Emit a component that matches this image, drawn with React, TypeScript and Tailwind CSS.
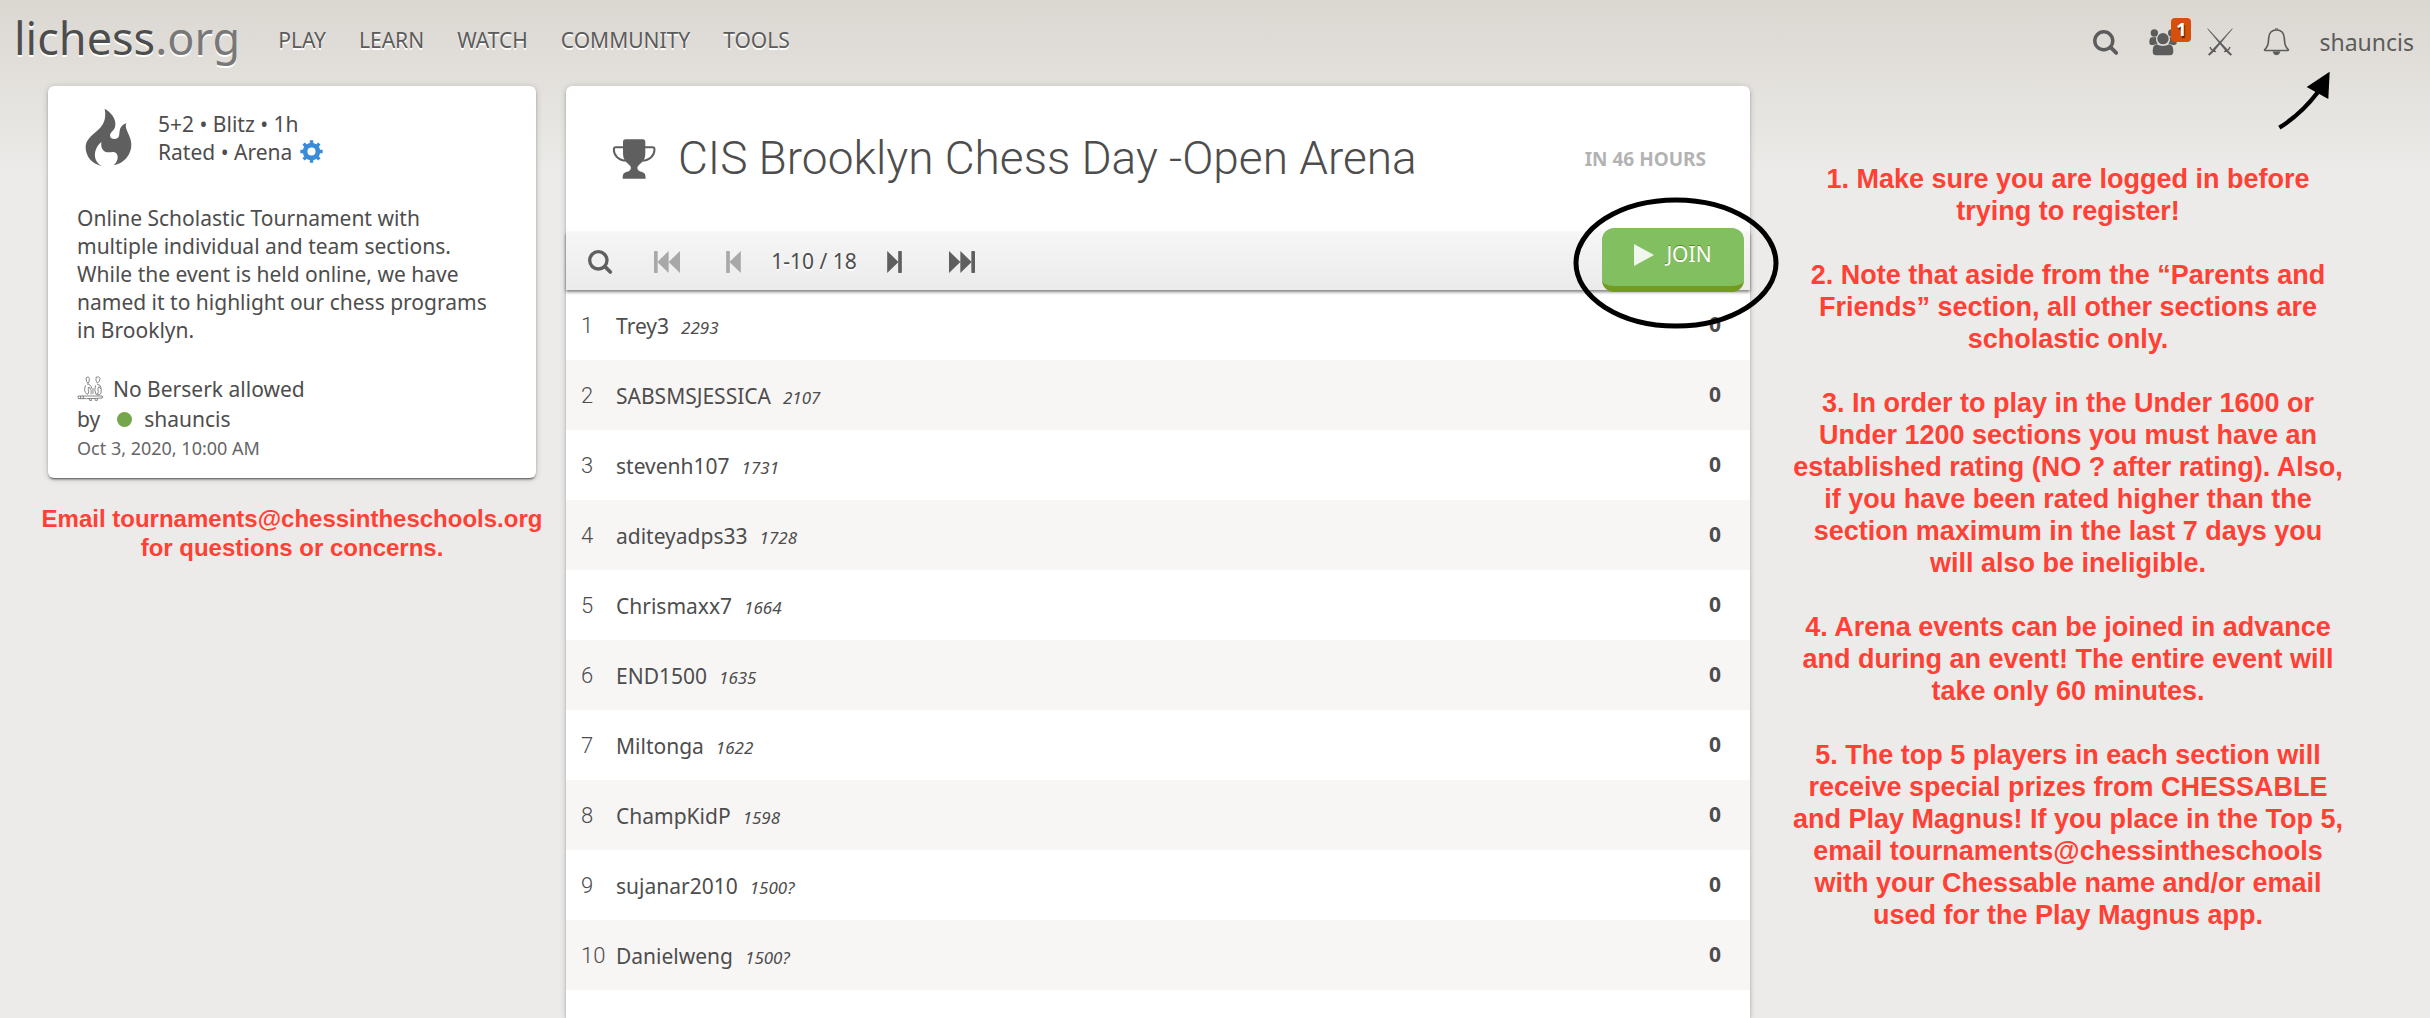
import React from 'react';

interface Player {
  name: string;
  rating: string;
}

const NAV_LINKS = ['Play', 'Learn', 'Watch', 'Community', 'Tools'];

const PLAYERS: Player[] = [
  { name: 'Trey3', rating: '2293' },
  { name: 'SABSMSJESSICA', rating: '2107' },
  { name: 'stevenh107', rating: '1731' },
  { name: 'aditeyadps33', rating: '1728' },
  { name: 'Chrismaxx7', rating: '1664' },
  { name: 'END1500', rating: '1635' },
  { name: 'Miltonga', rating: '1622' },
  { name: 'ChampKidP', rating: '1598' },
  { name: 'sujanar2010', rating: '1500?' },
  { name: 'Danielweng', rating: '1500?' },
];

const INSTRUCTIONS = [
  '1. Make sure you are logged in before trying to register!',
  '2. Note that aside from the “Parents and Friends” section, all other sections are scholastic only.',
  '3. In order to play in the Under 1600 or Under 1200 sections you must have an established rating (NO ? after rating). Also, if you have been rated higher than the section maximum in the last 7 days you will also be ineligible.',
  '4. Arena events can be joined in advance and during an event! The entire event will take only 60 minutes.',
  '5. The top 5 players in each section will receive special prizes from CHESSABLE and Play Magnus! If you place in the Top 5, email tournaments@chessintheschools with your Chessable name and/or email used for the Play Magnus app.',
];

const CARD =
  'bg-white shadow-[0_2px_2px_0_rgba(0,0,0,0.24),0_3px_1px_-2px_rgba(0,0,0,0.3),0_1px_6px_0_rgba(0,0,0,0.2)]';

function SearchIcon({ className }: { className: string }) {
  return (
    <svg viewBox="0 0 78 78" className={className} fill="none" stroke="currentColor">
      <circle cx="34" cy="34" r="26" strokeWidth="10" />
      <path d="M54 53 70 69" strokeWidth="11" strokeLinecap="round" />
    </svg>
  );
}

function TeamIcon() {
  return (
    <svg viewBox="326 96 84 82" className="w-7 h-7" fill="currentColor">
      <circle cx="342" cy="110" r="11" />
      <circle cx="394" cy="110" r="11" />
      <circle cx="368" cy="127" r="17" />
      <path d="M334 123h14q-3 12 4 19-8 1-12 4h-8q-6-1-5-8 0-13 7-15z" />
      <path d="M402 123h-14q3 12-4 19 8 1 12 4h8q6-1 5-8 0-13-7-15z" />
      <path d="M349 144q19 10 38 0 12 2 12 20 0 13-10 13h-42q-10 0-10-13 0-18 12-20z" />
    </svg>
  );
}

function SwordsIcon() {
  return (
    <svg viewBox="500 85 78 84" className="w-[26px] h-7" fill="currentColor" stroke="currentColor">
      <path d="M502 87 556 153 560 149z" strokeWidth="2" />
      <path d="M576 87 522 153 518 149z" strokeWidth="2" />
      <path d="M556 150 573 166M522 150 505 166" strokeWidth="6" />
      <path d="M509 142q4 12 18 14M569 142q-4 12-18 14" fill="none" strokeWidth="4" />
    </svg>
  );
}

function BellIcon() {
  return (
    <svg viewBox="670 84 82 86" className="w-[27px] h-7" fill="none" stroke="currentColor">
      <path
        d="M711 90c-15 0-23 10-24 25-1 18-2 25-12 35q-2 2 1 3h70q3-1 1-3c-10-10-11-17-12-35-1-15-9-25-24-25z"
        strokeWidth="5"
      />
      <path d="M707 89q0-4 4-4t4 4" strokeWidth="3" />
      <path d="M700 156h22q-2 11-11 11t-11-11z" fill="currentColor" strokeWidth="1" />
    </svg>
  );
}

function FlameIcon() {
  return (
    <svg viewBox="133 88 141 177" className="w-[47px] h-[59px]" fill="currentColor">
      <path d="M192 90C212 102 226 120 224 140C222 158 207 160 208 172C209 183 232 184 235 172C238 158 234 142 257 134C249 150 271 170 272 196C273 228 250 254 219 260C234 248 235 226 222 221C212 218 206 224 193 219C184 214 180 204 182 190C160 208 152 246 185 263C152 256 135 232 135 206C135 160 206 160 192 90Z" />
    </svg>
  );
}

function GearIcon() {
  return (
    <svg viewBox="-34 -34 68 68" className="w-[23px] h-[23px]" fill="none" stroke="currentColor">
      <circle r="19" strokeWidth="14" />
      {[0, 45, 90, 135].map((angle) => (
        <g key={angle} transform={`rotate(${angle})`} strokeWidth="10">
          <path d="M0-33V-20M0 20V33" />
        </g>
      ))}
    </svg>
  );
}

function BerserkIcon() {
  return (
    <svg viewBox="110 80 78 78" className="w-[26px] h-[26px]" fill="none" stroke="currentColor" strokeWidth="2">
      <path d="M137 86q8-7 10 2 1 8-4 14-6-4-6-16zM167 84q9-5 12 3 1 10-8 14-6-7-4-17z" />
      <path d="M136 108q-8 16 4 27 5 0 5-8-4-9 1-14 10 8 6 22M166 108q-6 14 1 27 8 1 7-8-4-10 2-15 11 8 6 20-3 5-12 5" />
      <path d="M140 104q12 0 14 14M170 104q12 2 13 14M158 116v18" />
      <path d="M113 140h73v6q-20 2-72 2zM121 140v8M129 140v8M146 148q1 8 7 6v-6M163 148q1 8 8 5v-5" />
    </svg>
  );
}

function TrophyIcon() {
  return (
    <svg viewBox="155 56 133 122" className="w-11 h-10" fill="currentColor">
      <path d="M196 57h52q8 0 8 8v35c0 22-12 28-20 36-6 6-6 14 4 19 12 3 17 4 17 22h-70c0-18 5-19 17-22 10-5 10-13 4-19-8-8-20-14-20-36v-35q0-8 8-8z" />
      <path
        d="M190 81h-24q-6 0-6 7c0 18 14 34 38 34M254 81h24q6 0 6 7c0 18-14 34-38 34"
        fill="none"
        stroke="currentColor"
        strokeWidth="6"
      />
    </svg>
  );
}

function StepIcon({ double, flip }: { double?: boolean; flip?: boolean }) {
  return (
    <svg
      viewBox={double ? '0 0 78 66' : '0 0 44 66'}
      className={`h-[22px] ${double ? 'w-[26px]' : 'w-[15px]'} ${flip ? 'rotate-180' : ''}`}
      fill="currentColor"
    >
      {double ? <path d="M0 0 34 33 0 66zM34 0 68 33 34 66z" /> : <path d="M0 0 34 33 0 66z" />}
      <rect x={double ? 67 : 33} width="11" height="66" rx="2" />
    </svg>
  );
}

function Header() {
  return (
    <header className="relative flex items-center h-[86px] pl-3.5 pr-4 text-[21px] [text-shadow:0_2px_0_#fff]">
      <a href="#" className="pb-3 text-[45px] leading-none">
        lichess<span className="text-[#787878]">.org</span>
      </a>
      <nav className="flex gap-[33px] ml-[38px] pb-1 text-[#5c5c5c]">
        {NAV_LINKS.map((link) => (
          <a key={link} href="#" className="uppercase">
            {link}
          </a>
        ))}
      </nav>
      <div className="flex items-center ml-auto pb-0.5 text-[#5c5c5c]">
        <button aria-label="Search" className="flex justify-center w-[57px]">
          <SearchIcon className="w-[27px] h-[27px]" />
        </button>
        <button aria-label="Teams" className="relative flex justify-center w-[57px]">
          <TeamIcon />
          <span className="absolute -top-2.5 right-0 w-5 h-6 rounded bg-[#d64f0b] text-center text-lg leading-[22px] font-bold text-white [text-shadow:1px_2px_1px_rgba(0,0,0,0.6)]">
            1
          </span>
        </button>
        <button aria-label="Challenges" className="flex justify-center w-[57px]">
          <SwordsIcon />
        </button>
        <button aria-label="Notifications" className="flex justify-center w-[57px]">
          <BellIcon />
        </button>
        <a href="#" className="pl-3.5 text-[23px] [text-shadow:none]">
          shauncis
        </a>
      </div>
      {/* Arrow pointing at the username */}
      <svg viewBox="708 210 168 180" className="absolute right-[98px] top-[70px] w-14 h-15 text-black">
        <path d="M718 383C762 356 802 318 834 276" fill="none" stroke="currentColor" strokeWidth="13" />
        <path d="M869 215 800 261 865 297z" fill="currentColor" />
      </svg>
    </header>
  );
}

function Sidebar() {
  return (
    <aside className="flex flex-col items-center">
      <div className={`w-full rounded-md pl-[29px] pr-10 pt-[22px] pb-4 ${CARD}`}>
        <div className="flex items-center pl-2 text-[#5f5f5f]">
          <FlameIcon />
          <div className="ml-[26px] leading-7 text-[#4d4d4d]">
            <p>5+2 • Blitz • 1h</p>
            <p className="flex items-center gap-2">
              Rated • Arena
              <a href="#" aria-label="Edit tournament" className="text-[#3a8bd8]">
                <GearIcon />
              </a>
            </p>
          </div>
        </div>
        <p className="mt-[37px] leading-7">
          Online Scholastic Tournament with multiple individual and team sections. While the event is held online, we
          have named it to highlight our chess programs in Brooklyn.
        </p>
        <p className="flex items-center gap-2.5 mt-[30px] leading-[30px]">
          <BerserkIcon />
          No Berserk allowed
        </p>
        <p className="flex items-center leading-[30px]">
          by
          <span className="w-[15px] h-[15px] ml-[17px] mr-3 rounded-full bg-[#74a64b]" />
          <a href="#">shauncis</a>
        </p>
        <time className="block text-lg leading-7 text-[#666]">Oct 3, 2020, 10:00 AM</time>
      </div>
      <p className="mt-[26px] text-center font-['Liberation_Sans',sans-serif] font-bold text-2xl leading-[29px] text-[#ff4035] whitespace-nowrap">
        Email tournaments@chessintheschools.org
        <br />
        for questions or concerns.
      </p>
    </aside>
  );
}

function Pager() {
  const button = 'flex justify-center w-[67px]';

  return (
    <div className="relative flex items-center h-[58px] pt-0.5 pr-1.5 bg-linear-to-b from-[#f6f6f6] to-[#ebebeb] text-[#5f5f5f] shadow-[0_2px_3px_rgba(0,0,0,0.5)]">
      <button aria-label="Search player" className={button}>
        <SearchIcon className="w-[26px] h-[26px]" />
      </button>
      <button aria-label="First page" disabled className={`${button} text-[#a8a8a8]`}>
        <StepIcon double flip />
      </button>
      <button aria-label="Previous page" disabled className={`${button} text-[#a8a8a8]`}>
        <StepIcon flip />
      </button>
      <span className="min-w-[94px] text-center text-[#4d4d4d] [text-shadow:0_2px_0_#fff]">1-10 / 18</span>
      <button aria-label="Next page" className={button}>
        <StepIcon />
      </button>
      <button aria-label="Last page" className={button}>
        <StepIcon double />
      </button>
      <div className="relative ml-auto mb-1">
        <button className="flex items-center justify-center gap-3 w-[142px] h-16 pb-1 rounded-xl border-b-[6px] border-[#739b20] bg-[#82bf60] text-white uppercase [text-shadow:0_-1px_0_#5a8a20]">
          <svg viewBox="0 0 20 22" className="w-5 h-[22px]" fill="#f0f7ec">
            <path d="M0 0 20 11 0 22z" />
          </svg>
          Join
        </button>
        {/* Hand-drawn ring around the join button */}
        <svg
          viewBox="0 0 206 132"
          className="absolute -left-[29px] -top-[31px] z-10 w-[206px] max-w-none h-[132px] pointer-events-none"
        >
          <ellipse cx="103" cy="66" rx="100" ry="63" fill="none" stroke="#000" strokeWidth="5" />
        </svg>
      </div>
    </div>
  );
}

function Standings() {
  return (
    <table className="w-full">
      <tbody>
        {PLAYERS.map((player, i) => (
          <tr key={player.name} className="h-[70px] even:bg-[#f7f6f5]">
            <td className="w-[50px] pl-[15px] font-['Roboto',sans-serif] font-light text-[22px]">{i + 1}</td>
            <td className="pt-[3px]">
              <a href="#">{player.name}</a>
              <span className="ml-3 text-[17px] italic">{player.rating}</span>
            </td>
            <td className="pr-[29px] text-right font-bold">0</td>
          </tr>
        ))}
      </tbody>
    </table>
  );
}

export default function App() {
  return (
    <div className="min-h-screen bg-[#ecebe9] bg-[linear-gradient(to_bottom,#dbd7d1,#ecebe9_174px)] font-['Noto_Sans',sans-serif] text-[21px] text-[#4d4d4d]">
      <Header />
      <div className="grid grid-cols-[488px_minmax(0,1fr)_680px] pl-12">
        <Sidebar />
        <main className={`ml-[30px] min-h-[932px] rounded-t-md ${CARD}`}>
          <div className="flex items-center h-[146px] pl-[46px] pr-11">
            <span className="text-[#5f5f5f]">
              <TrophyIcon />
            </span>
            <h1 className="ml-[22px] pb-0.5 font-['Roboto',sans-serif] font-light text-[46px]">
              CIS Brooklyn Chess Day -Open Arena
            </h1>
            <span className="ml-auto text-[19px] font-bold text-[#b3b3b3] uppercase">In 46 hours</span>
          </div>
          <Pager />
          <Standings />
        </main>
        <section className="pl-10 pr-[84px] pt-[77px] space-y-8 text-center font-['Liberation_Sans',sans-serif] font-bold text-[27px] leading-8 text-[#ff4035]">
          {INSTRUCTIONS.map((text) => (
            <p key={text}>{text}</p>
          ))}
        </section>
      </div>
    </div>
  );
}
